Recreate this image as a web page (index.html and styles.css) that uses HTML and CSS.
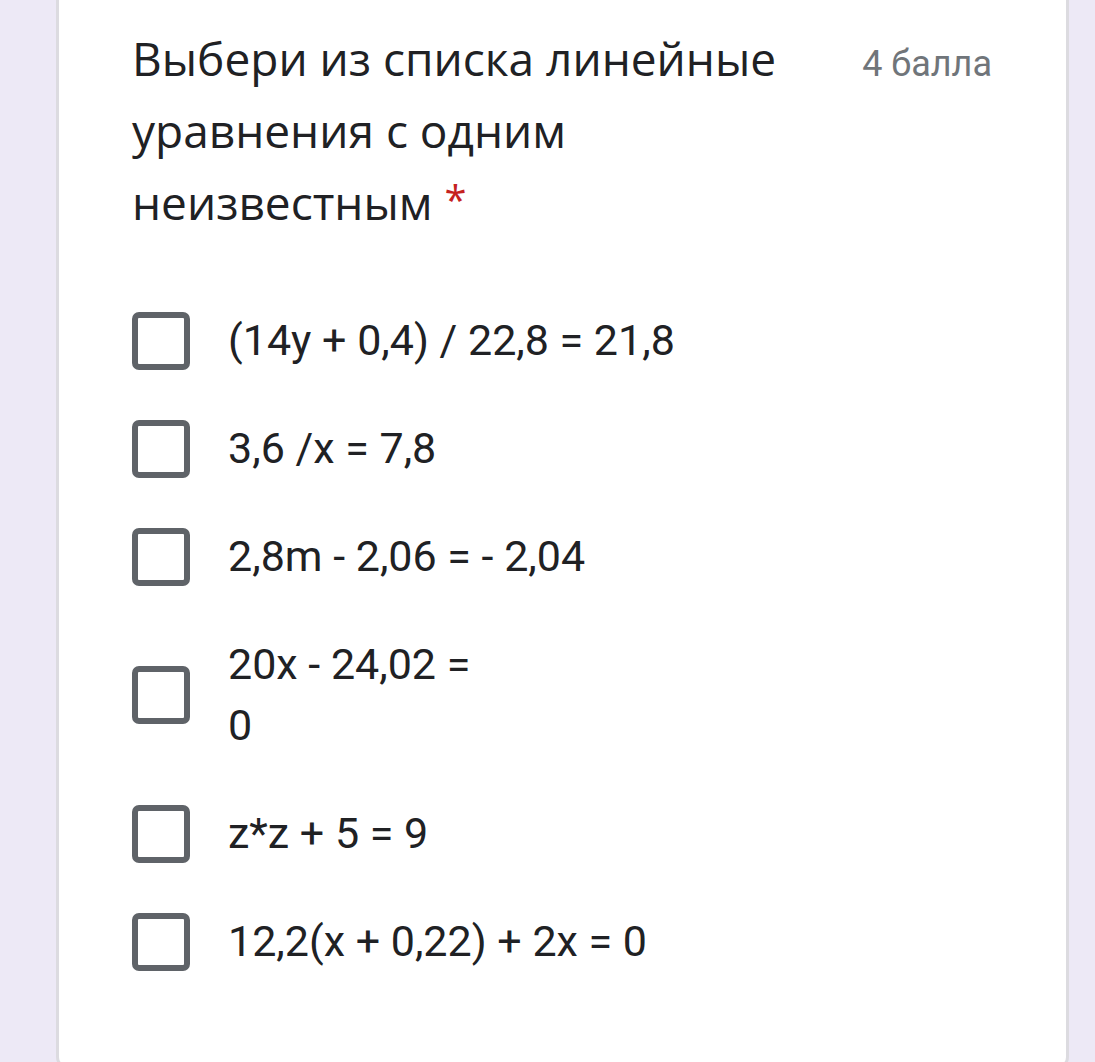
FILE: index.html
```html
<!DOCTYPE html>
<html lang="ru">
<head>
<meta charset="utf-8">
<link rel="stylesheet" href="styles.css">
</head>
<body>
<div class="page">
  <div class="card">
    <div class="header">
      <div class="title">Выбери из списка линейные уравнения с одним неизвестным <span class="req">*</span></div>
      <div class="points">4 балла</div>
    </div>
    <div class="options">
      <div class="option"><span class="box"></span><span class="label">(14y + 0,4) / 22,8 = 21,8</span></div>
      <div class="option"><span class="box"></span><span class="label">3,6 /x = 7,8</span></div>
      <div class="option"><span class="box"></span><span class="label">2,8m - 2,06 = - 2,04</span></div>
      <div class="option"><span class="box"></span><span class="label">20x - 24,02 =<br>0</span></div>
      <div class="option"><span class="box"></span><span class="label">z*z + 5 = 9</span></div>
      <div class="option"><span class="box"></span><span class="label">12,2(x + 0,22) + 2x = 0</span></div>
    </div>
  </div>
</div>
</body>
</html>
```

FILE: styles.css
```css
html, body {
  margin: 0;
  padding: 0;
  background: #ede9f6;
}
.page {
  height: 1062px;
  overflow: hidden;
  padding-left: 56px;
}
.card {
  width: 1013px;
  background: #ffffff;
  border: 3px solid #dcdbe0;
  border-top: none;
  border-radius: 0 0 12px 12px;
  padding: 22px 74px 70px 73px;
  box-sizing: border-box;
  font-family: Roboto, "Noto Sans", sans-serif;
  color: #202124;
}
.header {
  display: flex;
  justify-content: space-between;
  align-items: flex-start;
}
.title {
  width: 700px;
  font-family: "Open Sans", Roboto, sans-serif;
  font-size: 46px;
  line-height: 72px;
  color: #202124;
}
.req {
  color: #c5221f;
  font-size: 40px;
  vertical-align: top;
  line-height: 68px;
}
.points {
  font-size: 36px;
  line-height: 84px;
  color: #70757a;
}
.options {
  margin-top: 49px;
  display: flex;
  flex-direction: column;
}
.option {
  display: flex;
  align-items: center;
  padding: 23px 0 24px;
}
.box {
  width: 58px;
  height: 58px;
  box-sizing: border-box;
  border: 6px solid #5f6368;
  border-radius: 7px;
  flex-shrink: 0;
  margin-right: 38px;
}
.label {
  font-size: 43px;
  line-height: 61px;
  color: #202124;
}
```
